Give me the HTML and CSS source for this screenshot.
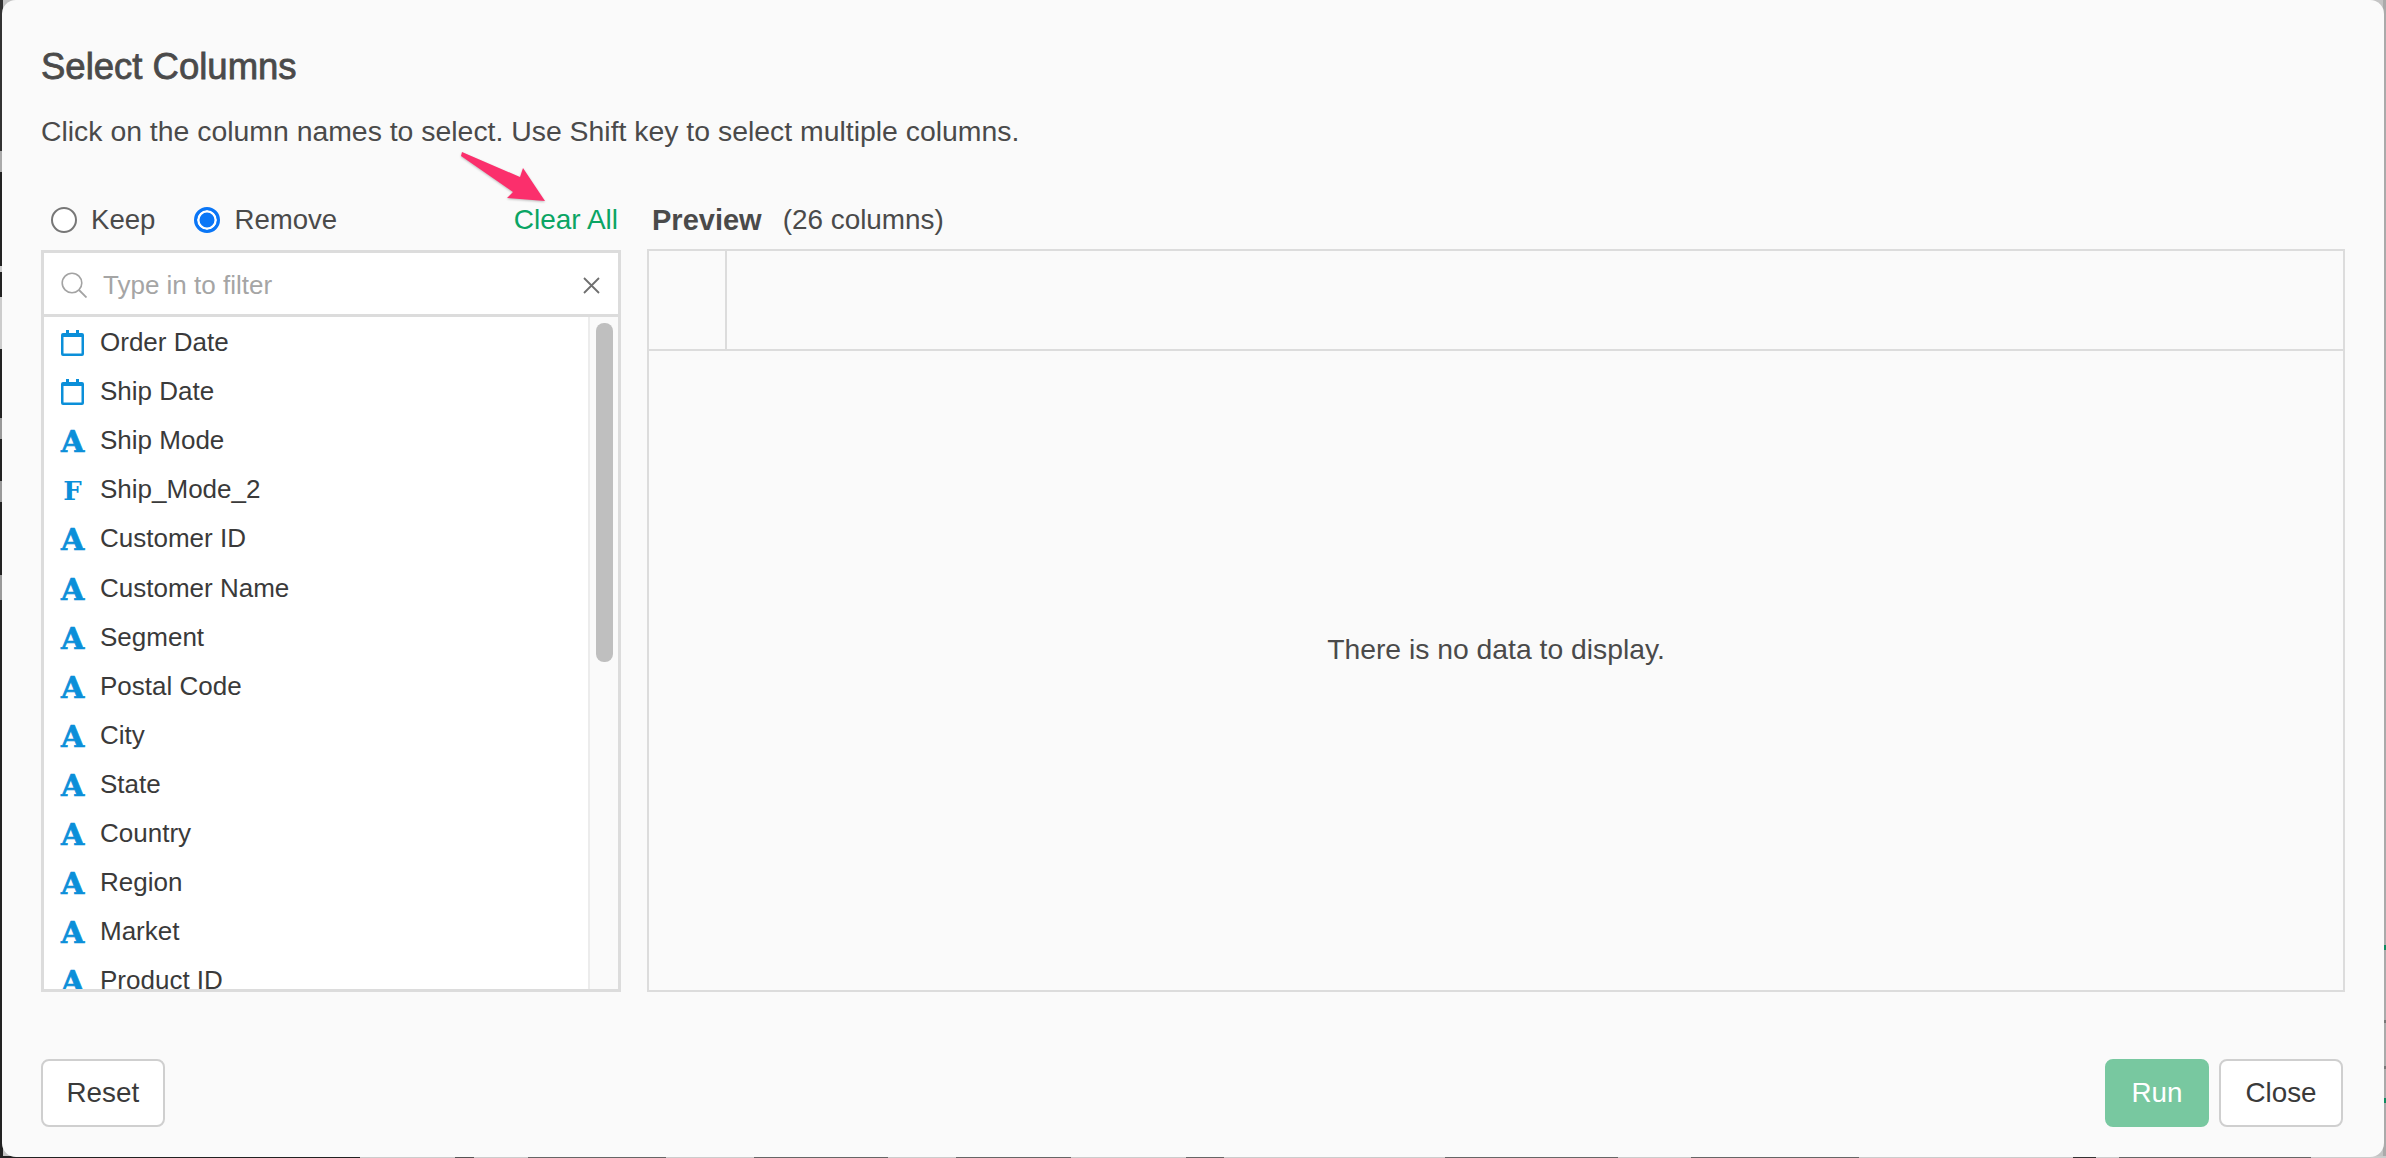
FILE: index.html
```html
<!DOCTYPE html>
<html lang="en">
<head>
<meta charset="utf-8">
<title>Select Columns</title>
<link rel="stylesheet" href="styles.css">
</head>
<body>
<div class="edge-left"></div>
<div class="edge-right"></div>
<div class="edge-bottom"></div>
<main class="dialog">
  <h1 class="title">Select Columns</h1>
  <p class="hint">Click on the column names to select. Use Shift key to select multiple columns.</p>
  <div class="panes">
    <section class="left">
      <div class="options">
        <label class="radio"><span class="dot"></span>Keep</label>
        <label class="radio"><span class="dot on"></span>Remove</label>
        <a class="clear">Clear All</a>
      </div>
      <div class="picker">
        <div class="filter">
          <svg class="search" viewBox="0 0 26 26" width="26" height="26"><circle cx="11" cy="11" r="9.8" fill="none" stroke="#a3a3a3" stroke-width="1.6"/><path d="M18 18l7.5 7.5" stroke="#a3a3a3" stroke-width="1.8" fill="none"/></svg>
          <span class="placeholder">Type in to filter</span>
          <svg class="x" viewBox="0 0 17 17" width="17" height="17"><path d="M1 1l15 15M16 1L1 16" stroke="#6f6f6f" stroke-width="1.8" fill="none"/></svg>
        </div>
        <div class="listwrap">
          <ul class="list">
            <li><svg class="ic" viewBox="0 0 23 26"><path fill="#0b8fd9" fill-rule="evenodd" d="M5 0h3v3h7V0h3v3h3a2 2 0 0 1 2 2v19a2 2 0 0 1-2 2H2a2 2 0 0 1-2-2V5a2 2 0 0 1 2-2h3zM2.500 7v16.500h18V7z"/></svg>Order Date</li>
            <li><svg class="ic" viewBox="0 0 23 26"><path fill="#0b8fd9" fill-rule="evenodd" d="M5 0h3v3h7V0h3v3h3a2 2 0 0 1 2 2v19a2 2 0 0 1-2 2H2a2 2 0 0 1-2-2V5a2 2 0 0 1 2-2h3zM2.500 7v16.500h18V7z"/></svg>Ship Date</li>
            <li><span class="ty">A</span>Ship Mode</li>
            <li><span class="ty f">F</span>Ship_Mode_2</li>
            <li><span class="ty">A</span>Customer ID</li>
            <li><span class="ty">A</span>Customer Name</li>
            <li><span class="ty">A</span>Segment</li>
            <li><span class="ty">A</span>Postal Code</li>
            <li><span class="ty">A</span>City</li>
            <li><span class="ty">A</span>State</li>
            <li><span class="ty">A</span>Country</li>
            <li><span class="ty">A</span>Region</li>
            <li><span class="ty">A</span>Market</li>
            <li><span class="ty">A</span>Product ID</li>
          </ul>
          <div class="track"><span class="thumb"></span></div>
        </div>
      </div>
    </section>
    <section class="right">
      <div class="preview-head"><strong>Preview</strong><span>(26 columns)</span></div>
      <div class="grid">
        <div class="grid-head"><span class="corner"></span></div>
        <div class="empty">There is no data to display.</div>
      </div>
    </section>
  </div>
  <footer class="foot">
    <button class="btn">Reset</button>
    <div class="foot-right">
      <button class="btn run">Run</button>
      <button class="btn">Close</button>
    </div>
  </footer>
  <svg class="arrow" viewBox="0 0 92 58" width="92" height="58"><path d="M2 2L60 27L63 18L85 51L47 48L53 42L1 6Z" fill="#fb2f6c"/></svg>
</main>
</body>
</html>
```
FILE: styles.css
```css
* { box-sizing: border-box; }
html, body { margin: 0; height: 100%; }
body {
  width: 2386px; height: 1158px; overflow: hidden; position: relative;
  background: #c4c4c4;
  font-family: "Liberation Sans", Arial, sans-serif;
  color: #4a4a4a;
}
.edge-left {
  position: absolute; left: 0; top: 0; bottom: 0; width: 3px;
  background: linear-gradient(to bottom,
    #333 0 151px, #aaa 151px 172px, #222 172px 266px, #ccc 266px 272px,
    #222 272px 297px, #ccc 297px 349px, #222 349px 418px, #999 418px 439px,
    #222 439px 481px, #999 481px 502px, #222 502px 575px, #999 575px 600px, #222 600px);
}
.edge-right {
  position: absolute; right: 0; top: 0; bottom: 0; width: 3px;
  background: linear-gradient(to bottom,
    #aaa 0 945px, #0d8a5f 945px 950px, #aaa 950px 1020px, #777 1020px 1023px,
    #aaa 1023px 1066px, #777 1066px 1069px, #aaa 1069px 1098px, #0d8a5f 1098px 1103px, #aaa 1103px);
}
.edge-bottom {
  position: absolute; left: 0; right: 0; bottom: 0; height: 2px;
  background: linear-gradient(to right,
    #222 0 360px, #ccc 360px 455px, #555 455px 474px, #ccc 474px 528px, #666 528px 666px,
    #ccc 666px 754px, #666 754px 888px, #ccc 888px 956px, #666 956px 1071px, #ccc 1071px 1186px,
    #666 1186px 1224px, #ccc 1224px 1445px, #666 1445px 1618px, #ccc 1618px 1691px, #666 1691px 1859px,
    #ccc 1859px 2073px, #333 2073px 2096px, #ccc 2096px 2119px, #666 2119px 2311px, #ccc 2311px);
}
.dialog {
  position: absolute; left: 2px; top: 0; width: 2382px; height: 1157px;
  background: #fafafa; border-radius: 14px; padding: 47px 39px 28px 39px;
  display: flex; flex-direction: column;
}
.title { margin: 0; font-size: 36.500px; line-height: 40px; font-weight: 400; color: #4a4a4a; -webkit-text-stroke: .8px #4a4a4a; }
.hint { margin: 26px 0 0; font-size: 28.400px; line-height: 36px; }
.panes { display: flex; gap: 26px; margin-top: 44px; height: 799px; flex: none; }
.left { width: 580px; flex: none; display: flex; flex-direction: column; }
.options { display: flex; align-items: center; height: 46px; margin: 4px 0 7px; font-size: 27.600px; padding-left: 10px; }
.radio { display: flex; align-items: center; gap: 14px; margin-right: 39px; }
.dot { width: 26px; height: 26px; border-radius: 50%; border: 2px solid #777; background: #fff; }
.dot.on { border: 3px solid #0a76f6; background: #0a76f6; box-shadow: inset 0 0 0 2.500px #fff; }
.clear { margin-left: auto; margin-right: 3px; color: #0aa564; font-size: 28px; }
.picker { flex: 1; min-height: 0; border: 3px solid #dcdcdc; display: flex; flex-direction: column; background: #fff; overflow: hidden; }
.filter { height: 64px; flex: none; display: flex; align-items: center; padding: 3px 18px 0 17px; border-bottom: 3px solid #dcdcdc; gap: 16px; }
.placeholder { font-size: 26px; color: #a5a5a5; flex: 1; }
.x { flex: none; }
.listwrap { flex: 1; min-height: 0; display: flex; overflow: hidden; }
.list { list-style: none; margin: 0; padding: 1px 0 0; flex: 1; min-width: 0; }
.list li { height: 49.100px; flex: none; display: flex; align-items: center; font-size: 26px; color: #3a3a3a; padding-left: 17px; }
.ic { width: 23px; height: 26px; margin-right: 16px; flex: none; }
.ty { width: 23px; margin-right: 16px; flex: none; text-align: center; font-family: "DejaVu Serif", serif; font-weight: 700; font-size: 30px; line-height: 30px; color: #0b8fd9; padding-top: 3px; -webkit-text-stroke: .7px #0b8fd9; }
.ty.f { font-size: 26px; -webkit-text-stroke: 0; }
.track { width: 30px; flex: none; border-left: 2px solid #ececec; background: #fafafa; padding: 6px 5px 0 6px; }
.thumb { display: block; height: 339px; border-radius: 8px; background: #bfbfbf; }
.right { flex: 1; min-width: 0; display: flex; flex-direction: column; }
.preview-head { height: 46px; margin: 4px 0 6px; display: flex; align-items: center; gap: 21px; font-size: 27.900px; padding-left: 5px; }
.preview-head strong { font-size: 29px; }
.grid { flex: 1; min-height: 0; border: 2px solid #dcdcdc; display: flex; flex-direction: column; }
.grid-head { height: 100px; border-bottom: 2px solid #dcdcdc; flex: none; }
.corner { display: block; width: 78px; height: 100%; border-right: 2px solid #dcdcdc; }
.empty { flex: 1; display: flex; align-items: center; justify-content: center; font-size: 28.300px; padding-bottom: 43px; }
.foot { display: flex; justify-content: space-between; align-items: flex-start; margin-top: 67px; padding-right: 2px; }
.foot-right { display: flex; gap: 10px; }
.btn { height: 68px; padding: 0 23.500px; border: 2px solid #cfcfcf; border-radius: 8px; background: #fff; color: #3a3a3a; font: 27.800px "Liberation Sans", Arial, sans-serif; }
.foot-right .btn { padding: 0 24.500px; }
.run { background: #78c8a0; border-color: #78c8a0; color: #fff; }
.arrow { position: absolute; left: 458px; top: 150px; filter: drop-shadow(0 1px 1px rgba(0,0,0,.25)); }
```
